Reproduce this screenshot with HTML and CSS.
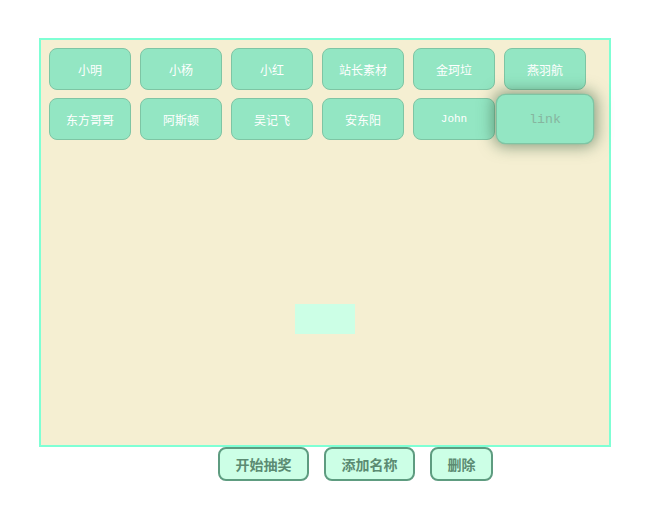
FILE: index.html
```html
<!DOCTYPE html>
<html>
<head>
<meta charset="utf-8">
<link rel="stylesheet" href="styles.css">
</head>
<body>
<div class="box">
  <div class="names">
    <div class="name">小明</div>
    <div class="name">小杨</div>
    <div class="name">小红</div>
    <div class="name">站长素材</div>
    <div class="name">金珂垃</div>
    <div class="name">燕羽航</div>
    <div class="name">东方哥哥</div>
    <div class="name">阿斯顿</div>
    <div class="name">吴记飞</div>
    <div class="name">安东阳</div>
    <div class="name latin">John</div>
    <div class="name latin active">link</div>
  </div>
  <div class="result"></div>
</div>
<div class="controls">
  <button class="btn">开始抽奖</button>
  <button class="btn">添加名称</button>
  <button class="btn">删除</button>
</div>
</body>
</html>
```
FILE: styles.css
```css
html, body {
  margin: 0;
  padding: 0;
  background: #ffffff;
}
body {
  padding-top: 38px;
  font-family: "Noto Sans CJK SC", sans-serif;
}
.box {
  position: relative;
  width: 568px;
  height: 405px;
  margin: 0 auto;
  border: 2px solid #7fffd4;
  background: #f5efd2;
}
.names {
  display: flex;
  flex-wrap: wrap;
  gap: 8px 9px;
  padding: 8px;
}
.name {
  box-sizing: border-box;
  width: 82px;
  height: 42px;
  border: 1px solid #7ec5a4;
  border-radius: 8px;
  background: #93e6c3;
  color: #ffffff;
  font-size: 12px;
  font-weight: 400;
  display: flex;
  align-items: center;
  justify-content: center;
}
.name.latin {
  font-family: "Liberation Mono", monospace;
  font-size: 11px;
}
.name.active {
  transform: scale(1.2);
  color: #86b59f;
  box-shadow: 0 0 12px 2px rgba(60, 100, 70, 0.6);
  position: relative;
  z-index: 1;
}
.result {
  position: absolute;
  left: 254px;
  top: 264px;
  width: 60px;
  height: 30px;
  background: #ccffe6;
}
.controls {
  display: flex;
  gap: 15px;
  padding-left: 218px;
}
.btn {
  box-sizing: border-box;
  height: 34px;
  padding: 0 15.5px;
  border: 2px solid #5e9c80;
  border-radius: 8px;
  background: #ccffe6;
  color: #5b8b72;
  font-family: "Noto Sans CJK SC", sans-serif;
  font-weight: bold;
  font-size: 14px;
  line-height: 1;
}
```
